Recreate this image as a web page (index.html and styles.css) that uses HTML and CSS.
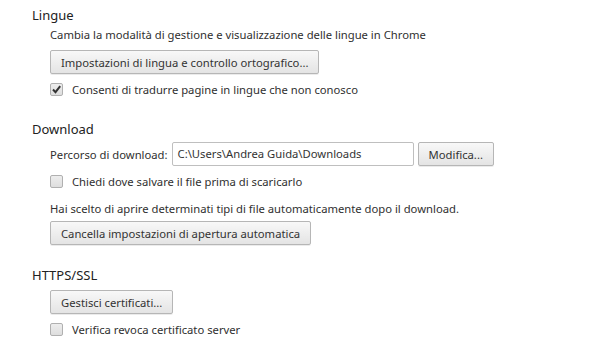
FILE: index.html
```html
<!DOCTYPE html>
<html lang="it">
<head>
  <meta charset="UTF-8" />
  <title>Impostazioni</title>
  <link rel="stylesheet" href="styles.css">
</head>
<body>
  <section class="section section-first">
    <h3>Lingue</h3>
    <div class="line">Cambia la modalità di gestione e visualizzazione delle lingue in Chrome</div>
    <div class="row">
      <button>Impostazioni di lingua e controllo ortografico...</button>
    </div>
    <label class="check">
      <span class="box checked">
        <svg width="11" height="11" viewBox="0 0 11 11"><path d="M2 5.5 L4.5 8.2 L9.2 2.2" fill="none" stroke="#333" stroke-width="2"/></svg>
      </span>
      Consenti di tradurre pagine in lingue che non conosco
    </label>
  </section>

  <section class="section">
    <h3>Download</h3>
    <div class="row path-row">
      <span class="path-label">Percorso di download:</span>
      <span class="path-input">C:\Users\Andrea Guida\Downloads</span>
      <button>Modifica...</button>
    </div>
    <label class="check">
      <span class="box"></span>
      Chiedi dove salvare il file prima di scaricarlo
    </label>
    <div class="line line-gap">Hai scelto di aprire determinati tipi di file automaticamente dopo il download.</div>
    <div class="row row-tight">
      <button>Cancella impostazioni di apertura automatica</button>
    </div>
  </section>

  <section class="section">
    <h3>HTTPS/SSL</h3>
    <div class="row">
      <button>Gestisci certificati...</button>
    </div>
    <label class="check">
      <span class="box"></span>
      Verifica revoca certificato server
    </label>
  </section>
</body>
</html>
```

FILE: styles.css
```css
* {
  box-sizing: border-box;
  margin: 0;
  padding: 0;
}

body {
  font-family: "Noto Sans", sans-serif;
  font-size: 11.25px;
  color: #303030;
  background: #fff;
  width: 600px;
  height: 345px;
  overflow: hidden;
}

.section {
  padding-left: 32px;
  margin-top: 20px;
}

.section-first {
  margin-top: 5px;
}

h3 {
  font-size: 13px;
  font-weight: normal;
  line-height: 20px;
  color: #222;
}

.line,
.row,
.check {
  margin-left: 18px;
}

.line {
  line-height: 20px;
}

.line-gap {
  margin-top: 8px;
}

.row {
  display: flex;
  align-items: center;
  gap: 4px;
  margin-top: 5px;
}

.row-tight {
  margin-top: 2px;
}

.path-row {
  margin-top: 3px;
}

.path-label {
  margin-right: 0;
}

button {
  font-family: inherit;
  font-size: 11.25px;
  color: #333;
  height: 24px;
  padding: 0 10px;
  border: 1px solid #b6b6b6;
  border-radius: 2px;
  background: linear-gradient(#f8f8f8, #e4e4e4);
  box-shadow: 0 1px 0 rgba(0, 0, 0, 0.08);
}

.path-input {
  width: 242px;
  height: 24px;
  line-height: 22px;
  padding: 0 5px;
  border: 1px solid #bfbfbf;
  border-radius: 2px;
  color: #333;
}

.check {
  display: flex;
  align-items: center;
  gap: 9px;
  height: 20px;
  margin-top: 5px;
}

.box {
  width: 13px;
  height: 13px;
  border: 1px solid #b0b0b0;
  border-radius: 2px;
  background: linear-gradient(#ededed, #dedede);
  display: flex;
  align-items: center;
  justify-content: center;
}
```
